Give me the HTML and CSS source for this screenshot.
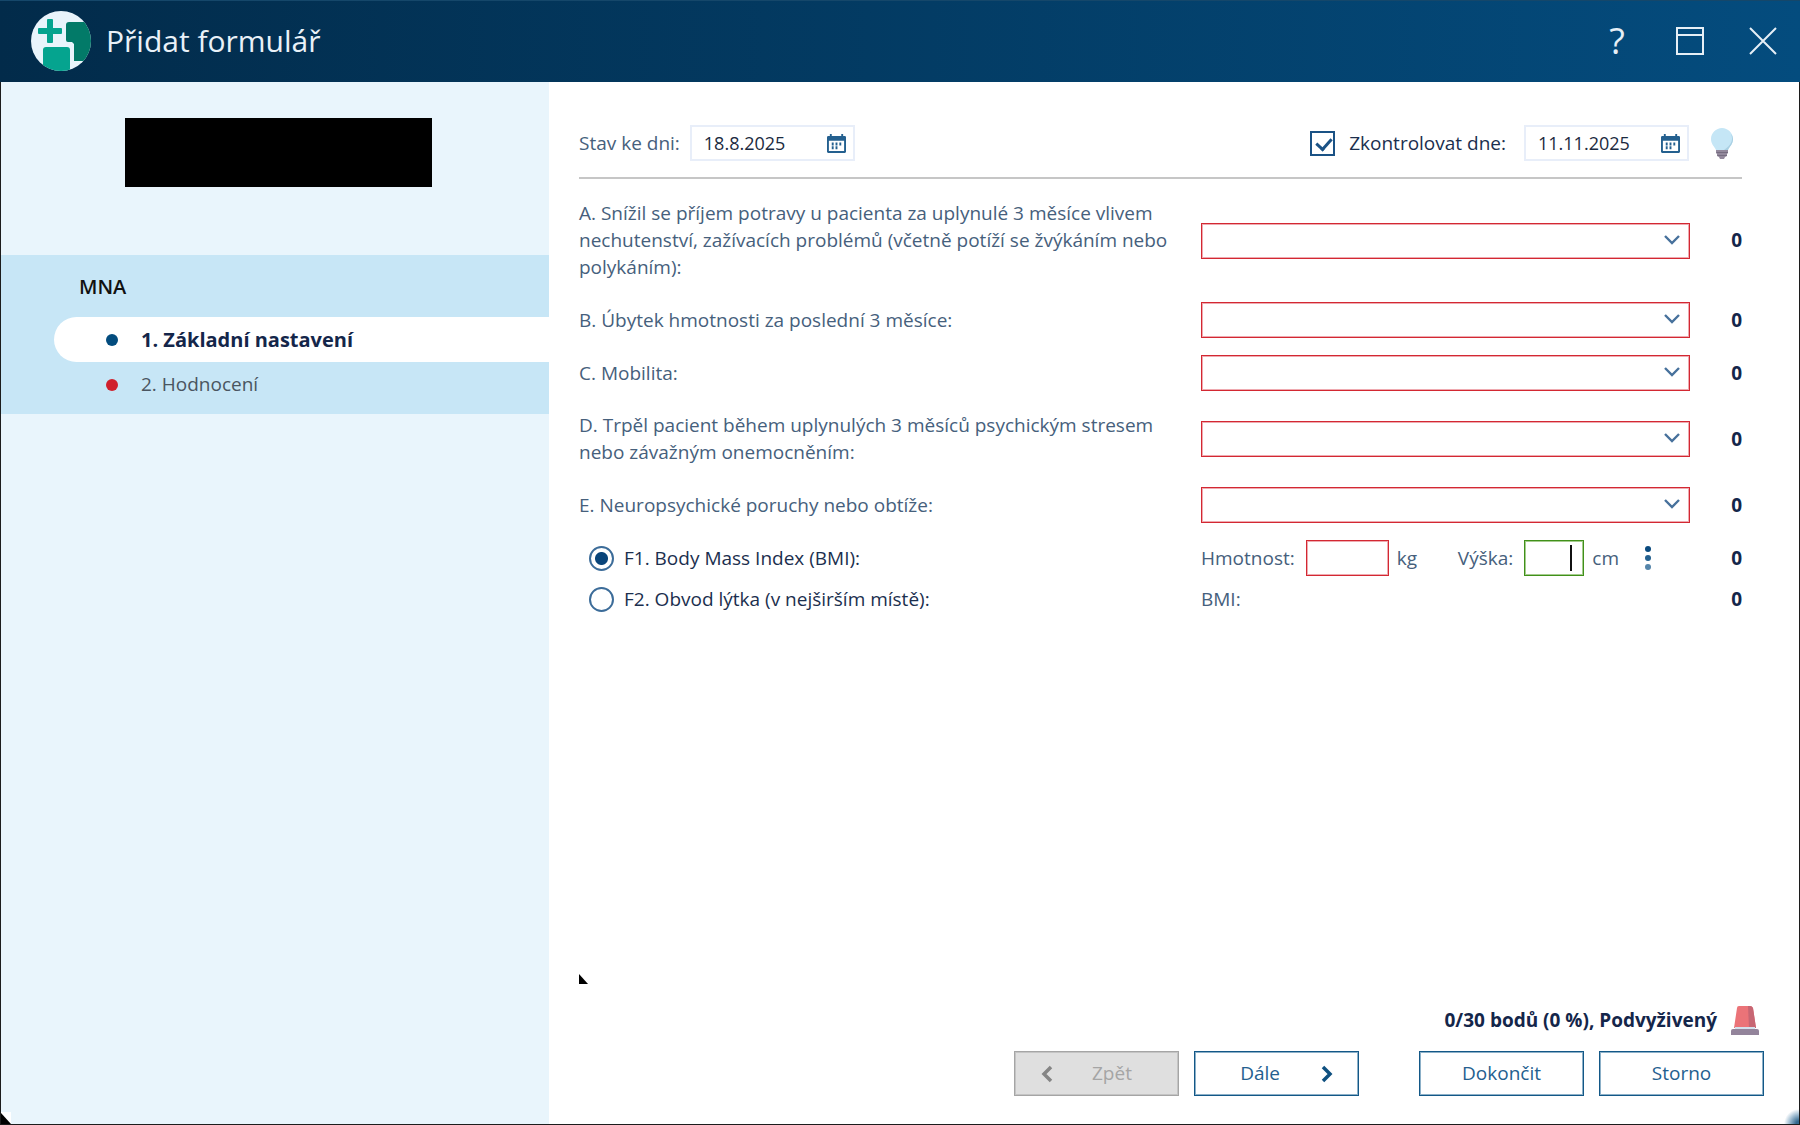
FILE: index.html
```html
<!DOCTYPE html>
<html lang="cs">
<head>
<meta charset="utf-8">
<title>Přidat formulář</title>
<link rel="stylesheet" href="styles.css">
</head>
<body>
<svg class="sprite" aria-hidden="true">
  <symbol id="calendar" viewBox="0 0 20 20">
    <path fill="#24608f" fill-rule="evenodd" d="M3 2V0h2v2h10V0h2v2h2l1 1v16l-1 1H1l-1-1V3l1-1zM2 7v11h16V7z"/>
    <path fill="#24608f" d="M5 9h2v3H5zM9 9h2v3H9zM13 9h2v3h-2zM5 13h2v3H5zM9 13h2v3H9z"/>
  </symbol>
  <symbol id="chevron-down" viewBox="0 0 16 10"><path fill="none" stroke="#47719c" stroke-width="2.400" d="M1 1l7 7 7-7"/></symbol>
</svg>
<div class="window">
  <header class="titlebar">
    <svg class="logo" viewBox="0 0 60 60" aria-hidden="true">
      <clipPath id="disc"><circle cx="30" cy="30" r="30"/></clipPath>
      <g clip-path="url(#disc)">
        <path fill="#e9f4fb" d="M0 0h60v60H0z"/>
        <path fill="#027a68" d="M38 11h22v39H43V33l-2-2h-4q-2 0-2-2V14q0-3 3-3z"/>
        <path fill="#05a48f" d="M17 8h4q1 0 1 1v8h8q1 0 1 1v4q0 1-1 1h-8v8q0 1-1 1h-4q-1 0-1-1v-8H8q-1 0-1-1v-4q0-1 1-1h8V9q0-1 1-1zM15 36h21q3 0 3 3v21H12V39q0-3 3-3z"/>
      </g>
    </svg>
    <h1 class="title">Přidat formulář</h1>
    <div class="window-buttons">
      <button type="button" class="window-button help" aria-label="Nápověda">?</button>
      <button type="button" class="window-button" aria-label="Maximalizovat"><svg width="28" height="28" viewBox="0 0 28 28"><path fill="none" stroke="#e6eff6" stroke-width="2" d="M1 1h26v26H1zM1 8h26"/></svg></button>
      <button type="button" class="window-button" aria-label="Zavřít"><svg width="28" height="28" viewBox="0 0 28 28"><path fill="none" stroke="#e6eff6" stroke-width="2" d="M1 1l26 26M27 1L1 27"/></svg></button>
    </div>
  </header>
  <div class="body">
    <nav class="sidebar">
      <div class="patient"></div>
      <div class="steps">
        <h2 class="steps-title">MNA</h2>
        <a href="#zakladni" class="step step-active">1. Základní nastavení</a>
        <a href="#hodnoceni" class="step">2. Hodnocení</a>
      </div>
      <svg class="corner-left" width="10" height="12" viewBox="0 0 10 12" aria-hidden="true"><path fill="#fff" d="M0 0h10v12H0z"/><path d="M0 1l10 11H0z"/></svg>
    </nav>
    <form class="main">
      <div class="dates">
        <label for="stav">Stav ke dni:</label>
        <div class="date"><input id="stav" type="text" value="18.8.2025"><button type="button" aria-label="Kalendář"><svg width="20" height="20"><use href="#calendar"/></svg></button></div>
        <div class="review">
          <input class="check" id="kontrola" type="checkbox" checked>
          <label class="dark" for="kontrola">Zkontrolovat dne:</label>
          <div class="date"><input type="text" value="11.11.2025" aria-label="Datum kontroly"><button type="button" aria-label="Kalendář"><svg width="20" height="20"><use href="#calendar"/></svg></button></div>
          <svg class="bulb" width="22" height="32" viewBox="0 0 22 32" aria-hidden="true">
            <path fill="#c5e6f6" d="M11 1c6 0 11 5 11 11 0 5-3 7-5 11H5C3 19 0 17 0 12 0 6 5 1 11 1z"/>
            <path fill="#a9cfe2" d="M20 7c3 7-1 12-7 16h4c2-4 5-6 5-11q0-3-2-5z"/>
            <path fill="#93899c" d="M5 23h12v3l-1 1v2l-2 1-1 2H9l-1-2-2-1v-2l-1-1z"/><path fill="#766d80" d="M5 25h12v1H6zM6 28h10v1H7z"/>
          </svg>
        </div>
      </div>
      <div class="questions">
        <div class="row"><label for="a">A. Snížil se příjem potravy u pacienta za uplynulé 3 měsíce vlivem nechutenství, zažívacích problémů (včetně potíží se žvýkáním nebo polykáním):</label><div class="select"><select id="a"><option></option></select><svg width="16" height="10"><use href="#chevron-down"/></svg></div><output>0</output></div>
        <div class="row"><label for="b">B. Úbytek hmotnosti za poslední 3 měsíce:</label><div class="select"><select id="b"><option></option></select><svg width="16" height="10"><use href="#chevron-down"/></svg></div><output>0</output></div>
        <div class="row"><label for="c">C. Mobilita:</label><div class="select"><select id="c"><option></option></select><svg width="16" height="10"><use href="#chevron-down"/></svg></div><output>0</output></div>
        <div class="row"><label for="d">D. Trpěl pacient během uplynulých 3 měsíců psychickým stresem nebo závažným onemocněním:</label><div class="select"><select id="d"><option></option></select><svg width="16" height="10"><use href="#chevron-down"/></svg></div><output>0</output></div>
        <div class="row"><label for="e">E. Neuropsychické poruchy nebo obtíže:</label><div class="select"><select id="e"><option></option></select><svg width="16" height="10"><use href="#chevron-down"/></svg></div><output>0</output></div>
        <div class="row">
          <div class="choice"><input class="radio" type="radio" name="f" id="f1" checked><label class="dark" for="f1">F1. Body Mass Index (BMI):</label></div>
          <div class="measures">
            <label for="kg">Hmotnost:</label><input class="number weight" id="kg" type="text"><span class="unit">kg</span>
            <label class="height-label" for="cm">Výška:</label><div class="caret-box"><input class="number height" id="cm" type="text"><span class="caret"></span></div><span class="unit">cm</span>
            <button type="button" class="more" aria-label="Další"><svg width="6" height="26" viewBox="0 0 6 26"><circle cx="3" cy="4" r="3" fill="#0a4a7e"/><circle cx="3" cy="13" r="3" fill="#24608f"/><circle cx="3" cy="22" r="3" fill="#5585aa"/></svg></button>
          </div>
          <output>0</output>
        </div>
      </div>
      <div class="row row-last">
        <div class="choice"><input class="radio" type="radio" name="f" id="f2"><label class="dark" for="f2">F2. Obvod lýtka (v nejširším místě):</label></div>
        <span>BMI:</span>
        <output>0</output>
      </div>
      <footer class="footer">
        <svg class="marker" width="9" height="10" viewBox="0 0 9 10" aria-hidden="true"><path d="M0 0l9 10H0z"/></svg>
        <div class="result">
          <strong>0/30 bodů (0 %), Podvyživený</strong>
          <svg width="28" height="29" viewBox="0 0 28 29" aria-hidden="true"><path fill="#eb7378" d="M6 2q0-2 2-2h11q2 0 3 2l3 20H3z"/><path fill="#c76673" d="M17 0h2q2 0 3 2l3 20h-7z"/><path fill="#d3e0ec" d="M4 21h20v2H4z"/><path fill="#93849b" d="M2 23h24q2 0 2 2v4H0v-4q0-2 2-2z"/></svg>
        </div>
        <div class="actions">
          <button type="button" class="action back" disabled><svg width="12" height="18" viewBox="0 0 12 18"><path fill="none" stroke="#858585" stroke-width="3.500" d="M10 2L3 9l7 7"/></svg><span>Zpět</span></button>
          <button type="button" class="action next"><span>Dále</span><svg width="12" height="18" viewBox="0 0 12 18"><path fill="none" stroke="#0f5080" stroke-width="3.500" d="M2 2l7 7-7 7"/></svg></button>
          <button type="button" class="action finish">Dokončit</button>
          <button type="button" class="action">Storno</button>
        </div>
      </footer>
      <span class="grip"></span>
    </form>
  </div>
</div>
</body>
</html>
```
FILE: styles.css
```css
* { box-sizing: border-box; }
body {
  margin: 0;
  font-family: "Open Sans", "Noto Sans", sans-serif;
  font-size: 19px;
  line-height: 27px;
  color: #46607c;
}
button, input, select { font: inherit; margin: 0; padding: 0; }
button { background: none; border: 0; }
.sprite { position: absolute; width: 0; height: 0; }
.window { display: flex; flex-direction: column; min-height: 100vh; }

.titlebar {
  display: flex;
  align-items: center;
  height: 82px;
  padding: 0 23px 0 31px;
  box-shadow: inset 0 1px #15476a;
  background: linear-gradient(90deg, #022b4a, #044c7e);
  color: #e9f1f8;
}
.logo { width: 60px; height: 60px; }
.title { margin: 0 0 0 15px; font-size: 30px; font-weight: 400; line-height: 40px; }
.window-buttons { display: flex; align-items: center; gap: 45px; margin-left: auto; }
.window-button { width: 28px; height: 28px; color: #e6eff6; }
.window-button svg { display: block; }
.help { font-size: 36px; line-height: 28px; }

.body { display: flex; flex: 1; border: 1px solid #1c1c1c; border-top: 0; }
.sidebar { position: relative; flex: none; width: 548px; padding-top: 36px; background: #e9f5fc; }
.patient { width: 307px; height: 69px; margin-left: 124px; background: #000; }
.steps { margin-top: 68px; padding: 18px 0 7px; background: #c7e6f6; }
.steps-title { margin: 0 0 17px 78px; font-size: 20px; font-weight: 600; color: #111; }
.step {
  display: flex;
  align-items: center;
  gap: 23px;
  height: 45px;
  margin-left: 53px;
  padding-left: 52px;
  border-radius: 23px 0 0 23px;
  color: #4a5560;
  text-decoration: none;
}
.step::before { content: ""; width: 12px; height: 12px; border-radius: 50%; background: #d0202c; }
.step-active { background: #fff; color: #14264a; font-size: 20px; font-weight: 700; }
.step-active::before { background: #034c7e; }
.corner-left { position: absolute; left: 0; bottom: 0; }

.main { position: relative; display: flex; flex: 1; flex-direction: column; padding: 43px 57px 28px 30px; background: #fff; }
.dark { color: #1b2f4e; }
.dates { display: flex; align-items: center; gap: 10px; padding-bottom: 16px; border-bottom: 2px solid #c6c6c6; }
.date { display: flex; align-items: center; width: 165px; height: 36px; padding: 0 7px 0 12px; border: 2px solid #e8eef9; }
.date input { flex: 1; min-width: 0; border: 0; background: none; font-size: 18px; color: #1b2a40; }
.date svg { display: block; width: 19px; height: 19px; }
.review { display: flex; align-items: center; margin-left: auto; }
.check { position: relative; width: 25px; height: 25px; margin-right: 14px; appearance: none; border: 2px solid #1a5285; }
.check:checked::after { content: ""; position: absolute; left: 7px; top: 2px; width: 7px; height: 12px; border: solid #1a5285; border-width: 0 3px 3px 0; transform: rotate(42deg); }
.review .date { margin-left: 18px; }
.bulb { margin: 0 9px 0 22px; }

.questions { display: flex; flex-direction: column; gap: 17px; padding-top: 17px; }
.row { display: grid; grid-template-columns: minmax(0, 1fr) 489px 52px; align-items: center; }
.row > label { padding: 4px 22px 4px 0; }
.row output { text-align: right; font-weight: 700; color: #14264a; }
.row-last { padding-top: 10px; }
.select { position: relative; height: 36px; }
.select select, .number { display: block; height: 36px; border: 1px solid #d32832; border-radius: 0; background: #fff; box-shadow: inset 0 0 0 1px #efaab0; }
.select select { width: 100%; appearance: none; }
.select svg { position: absolute; right: 10px; top: 12px; pointer-events: none; }
.choice { display: flex; align-items: center; gap: 10px; padding-left: 10px; }
.radio { width: 25px; height: 25px; appearance: none; border: 2px solid #3c6c99; border-radius: 50%; }
.radio:checked { background: radial-gradient(circle, #0a457a 6px, #fff 7px); }
.measures { display: flex; align-items: center; }
.number.weight { width: 83px; margin-left: 11px; }
.number.height { width: 60px; border-color: #41901a; box-shadow: inset 0 0 0 1px #a5cc8e; }
.unit { margin-left: 8px; }
.height-label { margin-left: auto; margin-right: 11px; }
.caret-box { position: relative; }
.caret { position: absolute; right: 12px; top: 5px; width: 2px; height: 26px; background: #111; }
.more { margin: 0 39px 0 26px; }
.more svg { display: block; }

.footer { margin-top: auto; margin-right: -22px; }
.marker { display: block; }
.result { display: flex; align-items: center; justify-content: flex-end; gap: 14px; margin: 22px 5px 16px 0; color: #14264a; }
.actions { display: flex; justify-content: flex-end; gap: 15px; }
.action { display: flex; align-items: center; justify-content: center; width: 165px; height: 45px; border: 1px solid #135887; box-shadow: inset 0 0 0 1px #8cb0c8; color: #24608f; }
.back { justify-content: flex-start; gap: 39px; padding-left: 26px; border-color: #a5a5a5; background: #dfdfdf; box-shadow: inset 0 0 0 1px #c4c4c4; color: #a5a5a5; }
.next { justify-content: flex-end; gap: 41px; padding-right: 25px; }
.finish { margin-left: 45px; }
.grip { position: absolute; right: 0; bottom: 0; width: 15px; height: 15px; background: radial-gradient(circle at 100% 100%, #34698f 3px, #a9c3d6 10px, #fff 15px); }
```
